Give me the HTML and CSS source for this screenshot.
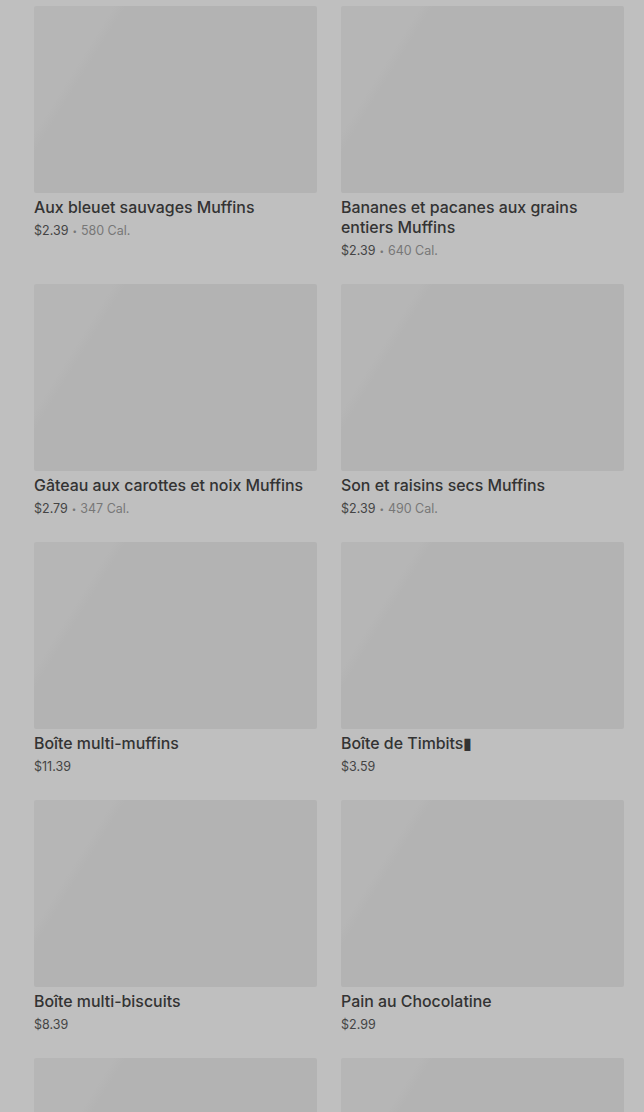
FILE: index.html
```html
<!DOCTYPE html>
<html lang="fr">
<head>
    <meta charset="UTF-8">
    <meta name="viewport" content="width=device-width, initial-scale=1.0">
    <title>Muffins</title>
    <link rel="stylesheet" href="styles.css">
</head>
<body>
    <div class="grid">
        <div class="card">
            <div class="thumb"></div>
            <div class="name">Aux bleuet sauvages Muffins</div>
            <div class="meta"><span class="price">$2.39</span><span class="dot">•</span>580 Cal.</div>
        </div>
        <div class="card">
            <div class="thumb"></div>
            <div class="name">Bananes et pacanes aux grains entiers Muffins</div>
            <div class="meta"><span class="price">$2.39</span><span class="dot">•</span>640 Cal.</div>
        </div>
        <div class="card">
            <div class="thumb"></div>
            <div class="name">Gâteau aux carottes et noix Muffins</div>
            <div class="meta"><span class="price">$2.79</span><span class="dot">•</span>347 Cal.</div>
        </div>
        <div class="card">
            <div class="thumb"></div>
            <div class="name">Son et raisins secs Muffins</div>
            <div class="meta"><span class="price">$2.39</span><span class="dot">•</span>490 Cal.</div>
        </div>
        <div class="card">
            <div class="thumb"></div>
            <div class="name">Boîte multi-muffins</div>
            <div class="meta"><span class="price">$11.39</span></div>
        </div>
        <div class="card">
            <div class="thumb"></div>
            <div class="name">Boîte de Timbits▮</div>
            <div class="meta"><span class="price">$3.59</span></div>
        </div>
        <div class="card">
            <div class="thumb"></div>
            <div class="name">Boîte multi-biscuits</div>
            <div class="meta"><span class="price">$8.39</span></div>
        </div>
        <div class="card">
            <div class="thumb"></div>
            <div class="name">Pain au Chocolatine</div>
            <div class="meta"><span class="price">$2.99</span></div>
        </div>
        <div class="card">
            <div class="thumb"></div>
        </div>
        <div class="card">
            <div class="thumb"></div>
        </div>
    </div>
</body>
</html>
```

FILE: styles.css
```css
body {
    margin: 0;
    background: #bfbfbf;
    font-family: Inter, "Noto Sans", sans-serif;
    overflow: hidden;
}
.grid {
    display: grid;
    grid-template-columns: 283px 283px;
    column-gap: 24px;
    row-gap: 23px;
    padding: 6px 20px 0 34px;
}
.thumb {
    height: 187px;
    background: linear-gradient(122deg, #b6b6b6 0, #b6b6b6 20%, #b3b3b3 23%, #b3b3b3 100%);
    border-radius: 2px;
}
.name {
    margin-top: 5px;
    font-size: 15.9px;
    font-weight: 500;
    line-height: 20px;
    color: #333333;
}
.meta {
    margin-top: 3px;
    font-size: 12.5px;
    line-height: 20px;
    color: #777777;
}
.price {
    color: #444444;
}
.dot {
    font-size: 8px;
    margin: 0 4px;
    vertical-align: 1px;
}
```
